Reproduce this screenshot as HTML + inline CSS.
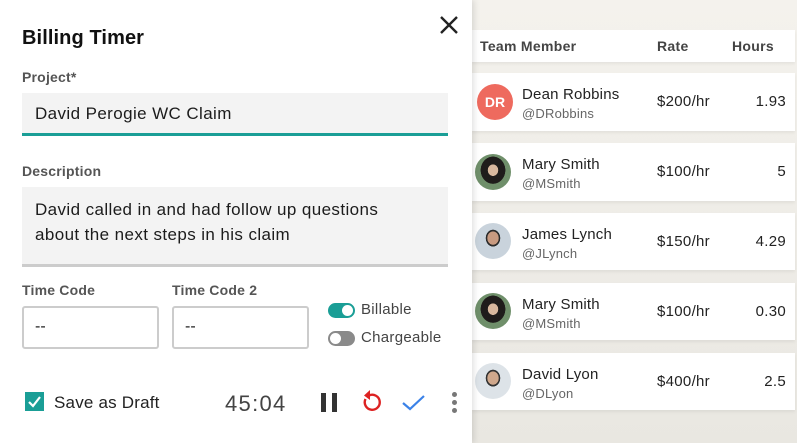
<!DOCTYPE html>
<html><head><style>
*{margin:0;padding:0;box-sizing:border-box}
body{width:797px;height:443px;overflow:hidden;position:relative;background:#efede7;font-family:"Liberation Sans",sans-serif;color:#1c1c1c}
.a{position:absolute}
.bg{left:472px;top:0;width:325px;height:443px;background:linear-gradient(#f4f2ed,#e9e7e1)}
.row{position:absolute;left:472px;width:323px;background:#fff;box-shadow:0 2px 3px rgba(0,0,0,.06)}
.name{position:absolute;left:50px;font-size:15px;color:#222;letter-spacing:.2px}
.handle{position:absolute;left:50px;font-size:13px;color:#666;letter-spacing:.2px}
.rate{position:absolute;left:185px;font-size:15px;color:#222;letter-spacing:.3px}
.hrs{position:absolute;right:9px;font-size:15px;color:#222;letter-spacing:.3px}
.av{position:absolute;left:3px;width:36px;height:36px;border-radius:50%;overflow:hidden}
.panel{left:0;top:0;width:472px;height:443px;background:#fff;box-shadow:2px 0 6px rgba(0,0,0,.12)}
.lbl{font-size:14px;font-weight:bold;color:#555;letter-spacing:.2px}
.tc{border:2px solid #ccc;border-radius:3px;width:137px;height:43px;font-size:16px;padding:10px 11px}
.hd{position:absolute;top:8px;font-size:14px;font-weight:bold;color:#444;letter-spacing:.3px}
</style></head><body>
<div class="a bg"></div>
<div class="row" style="top:30px;height:32px">
 <div class="hd" style="left:8px">Team Member</div>
 <div class="hd" style="left:185px">Rate</div>
 <div class="hd" style="left:260px">Hours</div>
</div>

<div class="row" style="top:73px;height:58px">
 <div class="av" style="top:11px;background:#ee6a5e;color:#fff;font-size:14px;font-weight:bold;text-align:center;line-height:36px;left:5px">DR</div>
 <div class="name" style="top:13px">Dean Robbins</div><div class="handle" style="top:33px">@DRobbins</div>
 <div class="rate" style="top:20px">$200/hr</div><div class="hrs" style="top:20px">1.93</div>
</div>
<div class="row" style="top:143px;height:58px">
 <div class="av" style="top:11px;background:radial-gradient(ellipse at 50% 45%,#d9b89e 0 20%,#1f1c1b 21% 48%,#6f8f6a 49%)"></div>
 <div class="name" style="top:13px">Mary Smith</div><div class="handle" style="top:33px">@MSmith</div>
 <div class="rate" style="top:20px">$100/hr</div><div class="hrs" style="top:20px">5</div>
</div>
<div class="row" style="top:213px;height:57px">
 <div class="av" style="top:10px;background:radial-gradient(ellipse at 50% 42%,#c89a80 0 22%,#2b2b2b 23% 28%,#c9d3dc 29%)"></div>
 <div class="name" style="top:13px">James Lynch</div><div class="handle" style="top:33px">@JLynch</div>
 <div class="rate" style="top:20px">$150/hr</div><div class="hrs" style="top:20px">4.29</div>
</div>
<div class="row" style="top:283px;height:57px">
 <div class="av" style="top:10px;background:radial-gradient(ellipse at 50% 45%,#d9b89e 0 20%,#1f1c1b 21% 48%,#6f8f6a 49%)"></div>
 <div class="name" style="top:13px">Mary Smith</div><div class="handle" style="top:33px">@MSmith</div>
 <div class="rate" style="top:20px">$100/hr</div><div class="hrs" style="top:20px">0.30</div>
</div>
<div class="row" style="top:353px;height:57px">
 <div class="av" style="top:10px;background:radial-gradient(ellipse at 50% 42%,#d0a88c 0 22%,#333 23% 28%,#dde3e8 29%)"></div>
 <div class="name" style="top:13px">David Lyon</div><div class="handle" style="top:33px">@DLyon</div>
 <div class="rate" style="top:20px">$400/hr</div><div class="hrs" style="top:20px">2.5</div>
</div>

<div class="a panel">
 <svg class="a" style="left:439px;top:15px" width="20" height="20"><path d="M2 2L18 18M18 2L2 18" stroke="#222" stroke-width="2.4"/></svg>
 <div class="a" style="left:22px;top:27px;font-size:20px;font-weight:bold;color:#111;letter-spacing:.1px">Billing Timer</div>
 <div class="a lbl" style="left:22px;top:69px">Project*</div>
 <div class="a" style="left:22px;top:93px;width:426px;height:43px;background:#f3f3f3;border-bottom:3px solid #1a9e96;padding:11px 13px;font-size:17px;letter-spacing:.4px">David Perogie WC Claim</div>
 <div class="a lbl" style="left:22px;top:163px">Description</div>
 <div class="a" style="left:22px;top:187px;width:426px;height:80px;background:#f3f3f3;border-bottom:3px solid #ccc;padding:10px 13px;font-size:17px;line-height:25px;letter-spacing:.4px"><span style="display:block;width:370px">David called in and had follow up questions about the next steps in his claim</span></div>
 <div class="a lbl" style="left:22px;top:282px">Time Code</div>
 <div class="a lbl" style="left:172px;top:282px">Time Code 2</div>
 <div class="a tc" style="left:22px;top:306px">--</div>
 <div class="a tc" style="left:172px;top:306px">--</div>
 <div class="a" style="left:328px;top:303px;width:27px;height:15px;border-radius:8px;background:#1a9e96"><div class="a" style="right:2px;top:2px;width:11px;height:11px;border-radius:50%;background:#fff"></div></div>
 <div class="a" style="left:361px;top:301px;font-size:15px;color:#444;letter-spacing:.3px">Billable</div>
 <div class="a" style="left:328px;top:331px;width:27px;height:15px;border-radius:8px;background:#8a8a8a"><div class="a" style="left:2px;top:2px;width:11px;height:11px;border-radius:50%;background:#fff"></div></div>
 <div class="a" style="left:361px;top:329px;font-size:15px;color:#444;letter-spacing:.3px">Chargeable</div>
 <div class="a" style="left:25px;top:392px;width:19px;height:19px;background:#1a9e96"><svg width="19" height="19"><path d="M4 10L8 14L15 5" stroke="#fff" stroke-width="2.2" fill="none"/></svg></div>
 <div class="a" style="left:54px;top:393px;font-size:17px;color:#222;letter-spacing:.2px">Save as Draft</div>
 <div class="a" style="left:225px;top:391px;font-size:22px;color:#444;letter-spacing:1.3px">45:04</div>
 <div class="a" style="left:321px;top:393px;width:5px;height:19px;background:#333"></div>
 <div class="a" style="left:332px;top:393px;width:5px;height:19px;background:#333"></div>
 <svg class="a" style="left:358px;top:388px" width="26" height="28"><path d="M7.5 11A7.5 7.5 0 1 0 11 7.5" stroke="#dd2222" stroke-width="2.4" fill="none"/><path d="M12 2L6 7.5L12 12Z" fill="#dd2222"/></svg>
 <svg class="a" style="left:401px;top:394px" width="26" height="18"><path d="M2 9L9 15L23 2" stroke="#3b82e8" stroke-width="2.2" fill="none"/></svg>
 <div class="a" style="left:452px;top:392px;width:5px;height:5px;border-radius:50%;background:#777"></div>
 <div class="a" style="left:452px;top:400px;width:5px;height:5px;border-radius:50%;background:#777"></div>
 <div class="a" style="left:452px;top:408px;width:5px;height:5px;border-radius:50%;background:#777"></div>
</div>
</body></html>
